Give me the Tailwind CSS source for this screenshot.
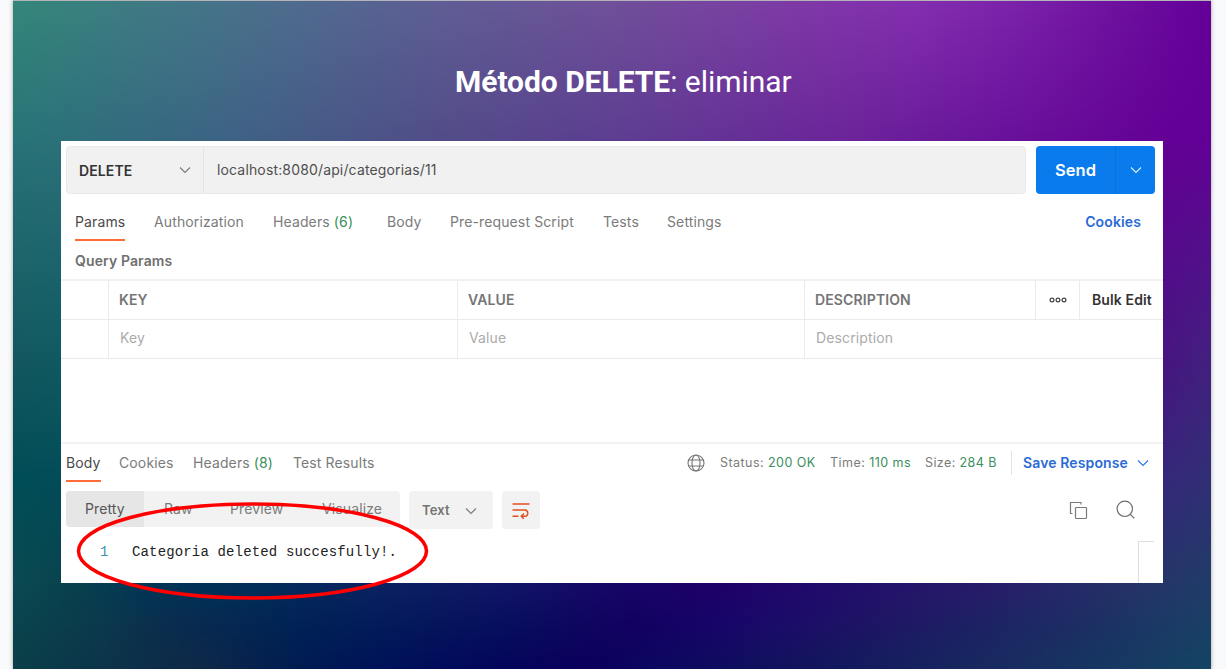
<!DOCTYPE html>
<html lang="es">
<head>
<meta charset="utf-8">
<title>Método DELETE: eliminar</title>
<script src="https://cdn.jsdelivr.net/npm/@tailwindcss/browser@4"></script>
</head>
<body class="bg-[#f8f9fb] w-[1226px] h-[669px] overflow-hidden font-['Inter','Liberation_Sans',sans-serif] text-[14px] tracking-[0.12px] text-[#7b7b7b]">
<main class="relative isolate ml-[13px] w-[1198px] h-[669px] overflow-hidden border-t border-[#b4b4b8] shadow-[0_0_4px_rgba(0,0,0,0.35)] flex flex-col">
  <!-- slide backdrop: horizontal colour rows blended vertically -->
  <div class="absolute inset-0 -z-10 bg-[linear-gradient(90deg,#34877a_0px,#46748a_200px,#5c6094_400px,#705099_600px,#8038a8_800px,#842fb0_900px,#7b23aa_1000px,#6f12a0_1100px,#640099_1198px)]"></div>
  <div class="absolute inset-0 -z-10 bg-[linear-gradient(90deg,#277476_0px,#3c6484_200px,#524c88_430px,#5e3c92_620px,#6b2499_830px,#68109b_1000px,#640096_1150px,#620096_1198px)] [mask-image:linear-gradient(180deg,transparent_0px,black_140px)]"></div>
  <div class="absolute inset-0 -z-10 bg-[linear-gradient(90deg,#14575f_0px,#0f5a62_48px,#471580_1150px,#42207f_1198px)] [mask-image:linear-gradient(180deg,transparent_140px,black_360px)]"></div>
  <div class="absolute inset-0 -z-10 bg-[linear-gradient(90deg,#004d56_0px,#024c58_48px,#35287a_1150px,#302f74_1198px)] [mask-image:linear-gradient(180deg,transparent_360px,black_480px)]"></div>
  <div class="absolute inset-0 -z-10 bg-[linear-gradient(90deg,#0a4a50_0px,#08404e_70px,#003656_130px,#003058_220px,#08265f_320px,#101866_470px,#160867_590px,#1e0068_690px,#220a6c_800px,#281c6a_970px,#263268_1120px,#203c68_1198px)] [mask-image:linear-gradient(180deg,transparent_480px,black_583px)]"></div>
  <div class="absolute inset-0 -z-10 bg-[linear-gradient(90deg,#0a444c_0px,#0c384c_90px,#0a2c4e_160px,#002454_270px,#031a5a_370px,#080e5e_500px,#120060_620px,#18066a_710px,#1e1864_880px,#1c2c64_1050px,#1a4066_1198px)] [mask-image:linear-gradient(180deg,transparent_583px,black_625px)]"></div>
  <div class="absolute inset-0 -z-10 bg-[linear-gradient(90deg,#0a4048_0px,#0c344a_90px,#0f2848_190px,#001b52_290px,#00105a_390px,#04055a_490px,#0c005c_580px,#0b0860_640px,#12155c_790px,#182c60_990px,#144463_1198px)] [mask-image:linear-gradient(180deg,transparent_625px,black_668px)]"></div>

  <h1 class="pt-[63px] pl-[442px] h-[140px] font-['Roboto',sans-serif] text-[30px] leading-[36px] tracking-[-0.04px] text-white font-normal whitespace-nowrap"><b class="font-bold">Método DELETE</b>: eliminar</h1>

  <section class="relative ml-[48px] w-[1102px] h-[442px] bg-white flex flex-col whitespace-nowrap">
    <div class="flex pt-[5px] pl-[5px]">
      <div class="flex w-[960px] h-[48px] rounded-[4px] border border-[#e9e9e9] bg-[#f1f1f1]">
        <div class="flex items-center justify-between w-[137px] pl-[12px] pr-[12px] border-r border-[#e4e4e4] text-[#333] font-semibold text-[14px]">DELETE
          <svg class="w-3 h-2" viewBox="0 0 12 8" fill="none" stroke="#7a7a7a" stroke-width="1.1"><path d="M1 1.5 6 6.5 11 1.5"/></svg>
        </div>
        <div class="flex items-center pl-[13px] pb-[2px] text-[#4f4f4f] text-[14px] tracking-[0.15px]">localhost:8080/api/categorias/11</div>
      </div>
      <div class="ml-[10px] flex w-[119px] h-[48px] rounded-[4px] bg-[#097bed] text-white">
        <div class="flex w-[80px] pt-[1px] items-center justify-center font-semibold text-[16.5px] tracking-normal border-r border-[#0a6fd6]">Send</div>
        <div class="flex grow items-center justify-center"><svg class="w-3 h-2" viewBox="0 0 12 8" fill="none" stroke="#d6e9ff" stroke-width="1.2"><path d="M1 1.5 6 6.5 11 1.5"/></svg></div>
      </div>
    </div>
    <nav class="flex h-[50px] pl-[14px] pr-[22px] leading-[20px] pt-[18px]">
      <div class="w-[79px]"><span class="inline-block h-[29px] border-b-2 border-[#ff6c37] text-[#4a4a4a]">Params</span></div>
      <div class="w-[119px]">Authorization</div>
      <div class="w-[114px]">Headers <span class="text-[#3a8f5c]">(6)</span></div>
      <div class="w-[63px]">Body</div>
      <div class="w-[153px]">Pre-request Script</div>
      <div class="w-[64px]">Tests</div>
      <div>Settings</div>
      <div class="ml-auto text-[#2a6ad6] font-semibold">Cookies</div>
    </nav>
    <div class="h-[35px] pl-[14px] pt-[7px] leading-[20px] font-semibold text-[#6f6f6f]">Query Params</div>
    <div class="grid grid-cols-[48px_349px_347px_231px_44px_83px] grid-rows-[39px_38px] border-t-2 border-b border-b-[#e9e9e9] border-t-[#f1f1f1] font-semibold text-[#757575] leading-[37px] h-[80px]">
      <div class="border-r border-b border-[#ebebeb]"></div>
      <div class="border-r border-b border-[#ebebeb] pl-[10px]">KEY</div>
      <div class="border-r border-b border-[#ebebeb] pl-[10px]">VALUE</div>
      <div class="border-r border-b border-[#ebebeb] pl-[10px]">DESCRIPTION</div>
      <div class="border-r border-b border-[#ebebeb] flex items-center justify-center"><svg class="w-[18px] h-[6px]" viewBox="0 0 18 6" fill="none" stroke="#444" stroke-width="1.2"><circle cx="3" cy="3" r="1.9"/><circle cx="9" cy="3" r="1.9"/><circle cx="15" cy="3" r="1.9"/></svg></div>
      <div class="border-b border-[#ebebeb] pl-[12px] text-[#333]">Bulk Edit</div>
      <div class="border-r border-[#ebebeb]"></div>
      <div class="border-r border-[#ebebeb] pl-[11px] font-normal text-[#ababab] leading-[35px]">Key</div>
      <div class="border-r border-[#ebebeb] pl-[11px] font-normal text-[#ababab] leading-[35px]">Value</div>
      <div class="pl-[11px] font-normal text-[#ababab] leading-[35px]">Description</div>
    </div>
    <div class="mt-[83px] flex h-[49px] border-t-2 border-[#f2f2f2] pl-[5px] pt-[9px] leading-[20px]">
      <div class="w-[53px]"><span class="inline-block h-[29px] border-b-2 border-[#ff6c37] text-[#4a4a4a]">Body</span></div>
      <div class="w-[74px]">Cookies</div>
      <div class="w-[100px]">Headers <span class="text-[#3a8f5c]">(8)</span></div>
      <div class="w-[394px]">Test Results</div>
      <svg class="w-[18px] h-[18px] mt-[1px]" viewBox="0 0 18 18" fill="none" stroke="#757575" stroke-width="1.1"><circle cx="9" cy="9" r="8"/><ellipse cx="9" cy="9" rx="4" ry="8"/><path d="M1.7 6h14.6M1.7 12h14.6"/></svg>
      <div class="ml-[15px] w-[110px] text-[12.5px] tracking-[0.45px]">Status: <span class="text-[#3a8f5c]">200 OK</span></div>
      <div class="w-[95px] text-[12.5px] tracking-[0.45px]">Time: <span class="text-[#3a8f5c]">110 ms</span></div>
      <div class="w-[86px] text-[12.5px] tracking-[0.4px]">Size: <span class="text-[#3a8f5c]">284 B</span></div>
      <div class="-mt-[2px] h-[24px] w-[12px] border-l border-[#e3e3e3]"></div>
      <div class="text-[#2a6ad6] font-semibold w-[114px]">Save Response</div>
      <svg class="w-3 h-2 mt-[6px]" viewBox="0 0 12 8" fill="none" stroke="#2a7be0" stroke-width="1.2"><path d="M1 1.5 6 6.5 11 1.5"/></svg>
    </div>
    <div class="flex pl-[5px] h-[50px]">
      <div class="flex w-[334px] h-[36px] rounded-[4px] bg-[#f2f2f2] overflow-hidden leading-[35px]">
        <div class="w-[78px] pl-[19px] bg-[#e6e6e6] text-[#555]">Pretty</div>
        <div class="w-[86px] pl-[20px]">Raw</div>
        <div class="w-[92px]">Preview</div>
        <div>Visualize</div>
      </div>
      <div class="ml-[9px] flex w-[84px] h-[38px] rounded-[4px] bg-[#f2f2f2] items-center pl-[13px] pr-[16px] pt-px justify-between text-[13px] font-semibold text-[#757575]">Text
        <svg class="w-3 h-2" viewBox="0 0 12 8" fill="none" stroke="#7a7a7a" stroke-width="1.1"><path d="M1 1.5 6 6.5 11 1.5"/></svg>
      </div>
      <div class="ml-[9px] flex w-[38px] h-[38px] rounded-[4px] bg-[#f2f2f2] items-center justify-center">
        <svg class="w-[18px] h-[17px]" viewBox="0 0 18 17" fill="none" stroke="#e0501f" stroke-width="1.4"><path d="M.5 2h17M.5 8h13a3.3 3.3 0 0 1 0 6.300H9.500M.5 14.300h6M12 11.500l-2.800 2.800 2.800 2.700"/></svg>
      </div>
      <svg class="ml-[529px] mt-[10px] w-[19px] h-[19px]" viewBox="0 0 19 19" fill="none" stroke="#7a7a7a" stroke-width="1.200"><path d="M3.500 12.500H1.500v-11h10.500V3.500"/><rect x="6.500" y="6.500" width="11" height="11" rx=".8"/></svg>
      <svg class="ml-[28px] mt-[9px] w-[19px] h-[19px]" viewBox="0 0 19 19" fill="none" stroke="#6f6f6f" stroke-width="1.200"><circle cx="8.800" cy="8.800" r="7.700"/><path d="m14.300 14.300 4 4"/></svg>
    </div>
    <div class="flex h-[42px] pl-[39px] font-['Liberation_Mono',monospace] text-[14px] leading-[23px]">
      <div class="w-[32px] text-[#4191ae]">1</div>
      <div class="text-[#222] tracking-[0.15px]">Categoria deleted succesfully!.</div>
      <div class="ml-auto mr-[9px] w-[16px] border-l border-t border-[#dedede]"></div>
    </div>
    <svg class="absolute left-[15px] top-[361px] w-[354px] h-[98px]" viewBox="0 0 354 98" fill="none" stroke="#ff0000" stroke-width="3.500"><ellipse cx="176.500" cy="49" rx="174" ry="47"/></svg>
  </section>
</main>
</body>
</html>
